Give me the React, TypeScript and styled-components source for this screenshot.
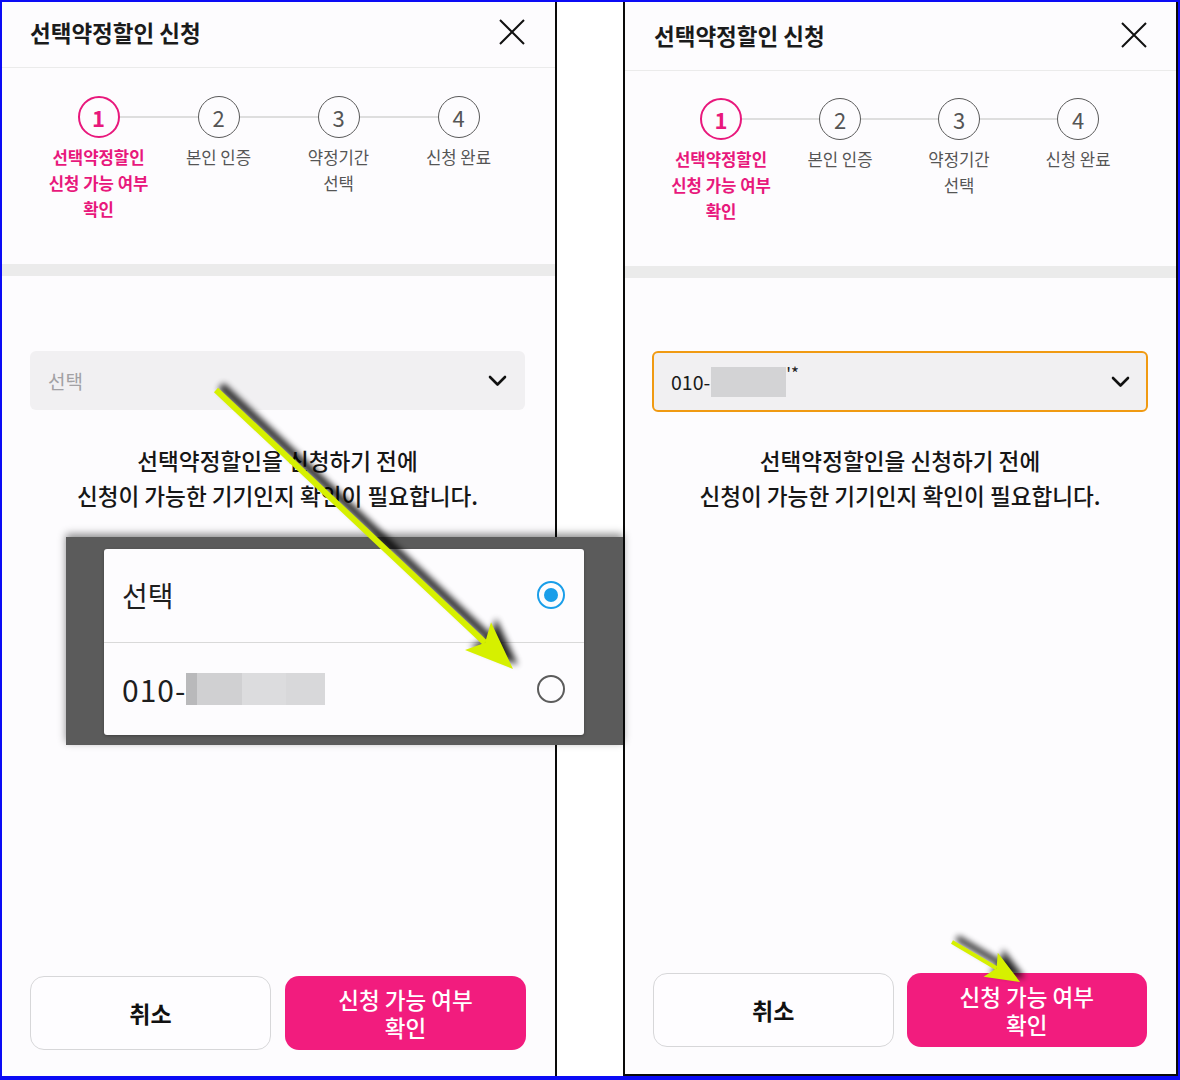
import React from "react";
import styled, { createGlobalStyle } from "styled-components";

const GlobalStyle = createGlobalStyle`
  html, body { margin: 0; padding: 0; background: #0b0bf5; }
  body { font-family: "Noto Sans CJK KR", "Noto Sans", sans-serif; }
  * { box-sizing: border-box; }
`;

const FONT = `"Noto Sans CJK KR", "Noto Sans", sans-serif`;
const PINK = "#f21c7e";
const PINK_TEXT = "#e8187c";

const Frame = styled.div`
  position: relative;
  width: 1180px;
  height: 1080px;
  background: #0b0bf5;
  padding: 2px 2px 4px 2px;
  display: flex;
  font-family: ${FONT};
`;

const Screen = styled.div<{ $right?: boolean }>`
  width: 555px;
  height: 100%;
  display: flex;
  flex-direction: column;
  background: #fdfcfe;
  border-right: 2px solid #0a0a0a;
  border-left: ${(p) => (p.$right ? "2px solid #0a0a0a" : "none")};
  border-bottom: ${(p) => (p.$right ? "2px solid #0a0a0a" : "none")};
`;

const Gap = styled.div`
  width: 66px;
  height: 100%;
  background: #ffffff;
`;

const Header = styled.div<{ $right?: boolean }>`
  height: ${(p) => (p.$right ? 69 : 66)}px;
  flex: none;
  display: flex;
  align-items: center;
  justify-content: space-between;
  padding: 0 ${(p) => (p.$right ? 29 : 30)}px ${(p) => (p.$right ? 3 : 5)}px ${(p) => (p.$right ? 29 : 28)}px;
  border-bottom: 1px solid #ebebeb;
`;

const Title = styled.h1`
  margin: 0;
  font-size: 22.5px;
  font-weight: 700;
  color: #1b1b1b;
`;

const CloseButton = styled.button`
  width: 26px;
  height: 26px;
  padding: 0;
  border: none;
  background: transparent;
  display: flex;
`;

const Steps = styled.div<{ $right?: boolean }>`
  height: ${(p) => (p.$right ? 195 : 196)}px;
  flex: none;
  display: flex;
  justify-content: center;
  padding-top: ${(p) => (p.$right ? 27 : 28)}px;
  padding-right: ${(p) => (p.$right ? 2 : 0)}px;
`;

const Step = styled.div<{ $last?: boolean; $gap: number }>`
  position: relative;
  width: ${(p) => p.$gap}px;
  display: flex;
  flex-direction: column;
  align-items: center;

  &::after {
    content: "";
    display: ${(p) => (p.$last ? "none" : "block")};
    position: absolute;
    top: 20px;
    left: 50%;
    width: ${(p) => p.$gap}px;
    height: 2px;
    background: #dedede;
  }
`;

const StepCircle = styled.div<{ $active?: boolean }>`
  position: relative;
  z-index: 1;
  width: 42px;
  height: 42px;
  border-radius: 50%;
  background: #fdfcfe;
  border: ${(p) => (p.$active ? `2px solid ${PINK_TEXT}` : "1.7px solid #5a5a5a")};
  color: ${(p) => (p.$active ? PINK_TEXT : "#555")};
  font-weight: ${(p) => (p.$active ? 700 : 400)};
  font-size: 22px;
  display: flex;
  align-items: center;
  justify-content: center;
  line-height: 1;
`;

const StepLabel = styled.div<{ $active?: boolean }>`
  margin-top: 6px;
  font-size: 16.7px;
  line-height: 26px;
  text-align: center;
  white-space: nowrap;
  color: ${(p) => (p.$active ? PINK_TEXT : "#555")};
  font-weight: ${(p) => (p.$active ? 700 : 400)};
`;

const Band = styled.div`
  height: 12px;
  flex: none;
  background: #ebebeb;
`;

const Body = styled.div<{ $right?: boolean }>`
  flex: 1;
  display: flex;
  flex-direction: column;
  padding: ${(p) => (p.$right ? "73px 28px 0 27px" : "75px 30px 0 28px")};
`;

const Select = styled.div<{ $focused?: boolean }>`
  height: ${(p) => (p.$focused ? 61 : 59)}px;
  border-radius: 6px;
  background: #f1f0f2;
  border: 2px solid ${(p) => (p.$focused ? "#f09a12" : "transparent")};
  display: flex;
  align-items: center;
  justify-content: space-between;
  padding: 0 16px 0 ${(p) => (p.$focused ? 17 : 16)}px;
`;

const SelectValue = styled.div<{ $placeholder?: boolean }>`
  display: flex;
  align-items: center;
  font-size: ${(p) => (p.$placeholder ? 19 : 19.5)}px;
  color: ${(p) => (p.$placeholder ? "#a2a1a4" : "#1a1a1a")};
`;

const Masked = styled.span`
  display: inline-block;
  width: 75px;
  height: 30px;
  margin-left: 1px;
  background: #d3d3d5;
`;

const Stars = styled.span`
  font-size: 17px;
  line-height: 1;
  align-self: flex-start;
  margin-top: -3px;
  color: #222;
`;

const Notice = styled.p<{ $right?: boolean }>`
  margin: ${(p) => (p.$right ? 31 : 33)}px 0 0;
  font-size: 22.6px;
  line-height: 35px;
  font-weight: 500;
  text-align: center;
  color: #161616;
`;

const Footer = styled.div<{ $right?: boolean }>`
  flex: none;
  display: grid;
  grid-template-columns: 1fr 1fr;
  column-gap: ${(p) => (p.$right ? 13 : 14)}px;
  padding: 0 29px ${(p) => (p.$right ? 27 : 26)}px 28px;
`;

const CancelButton = styled.button`
  height: 74px;
  border-radius: 14px;
  border: 1.5px solid #d7d7d9;
  background: #fefdff;
  font-family: ${FONT};
  font-size: 23px;
  font-weight: 700;
  color: #111;
`;

const ConfirmButton = styled.button`
  height: 74px;
  border-radius: 14px;
  border: none;
  background: ${PINK};
  font-family: ${FONT};
  font-size: 22.5px;
  font-weight: 500;
  line-height: 28px;
  color: #fff;
  padding: 0;
`;

/* Overlay: pasted picker dialog */
const PickerShade = styled.div`
  position: absolute;
  left: 66px;
  top: 537px;
  width: 557px;
  height: 208px;
  background: #5b5b5b;
  box-shadow: 0 -3px 8px rgba(0, 0, 0, 0.45);
  padding: 12px 39px 10px 38px;
  display: flex;
`;

const PickerCard = styled.div`
  flex: 1;
  background: #fdfcfe;
  border-radius: 3px;
  display: flex;
  flex-direction: column;
  box-shadow: 0 1px 3px rgba(0, 0, 0, 0.3);
`;

const PickerRow = styled.div<{ $first?: boolean }>`
  flex: 1;
  display: flex;
  align-items: center;
  justify-content: space-between;
  padding: 0 19px 0 18px;
  border-bottom: ${(p) => (p.$first ? "1px solid #d9d9d9" : "none")};
  font-size: 28px;
  color: #1e1e1e;
`;

const PickerText = styled.div`
  display: flex;
  align-items: center;
`;

const PickerNumber = styled.span`
  font-size: 30px;
  letter-spacing: 1px;
`;

const BlurBlock = styled.span<{ $w: number; $c: string }>`
  display: inline-block;
  width: ${(p) => p.$w}px;
  height: 32px;
  background: ${(p) => p.$c};
`;

const Radio = styled.span<{ $checked?: boolean }>`
  width: 28px;
  height: 28px;
  border-radius: 50%;
  border: ${(p) => (p.$checked ? "2.6px solid #1a9ee9" : "2.2px solid #5c5c5c")};
  display: flex;
  align-items: center;
  justify-content: center;

  &::after {
    content: "";
    display: ${(p) => (p.$checked ? "block" : "none")};
    width: 14px;
    height: 14px;
    border-radius: 50%;
    background: #1a9ee9;
  }
`;

const Annotations = styled.svg`
  position: absolute;
  left: 0;
  top: 0;
  width: 1180px;
  height: 1080px;
  pointer-events: none;
`;

const CloseIcon = () => (
  <svg width="26" height="26" viewBox="0 0 26 26">
    <path d="M1 1L25 25M25 1L1 25" stroke="#111" strokeWidth="2" fill="none" />
  </svg>
);

const Chevron = () => (
  <svg width="19" height="12" viewBox="0 0 19 12">
    <path d="M2 2L9.5 9.5L17 2" stroke="#111" strokeWidth="2.6" fill="none" strokeLinecap="round" strokeLinejoin="round" />
  </svg>
);

type StepDef = { n: string; label: React.ReactNode; active?: boolean };

const steps: StepDef[] = [
  {
    n: "1",
    active: true,
    label: (
      <>
        선택약정할인
        <br />
        신청 가능 여부
        <br />
        확인
      </>
    ),
  },
  { n: "2", label: "본인 인증" },
  {
    n: "3",
    label: (
      <>
        약정기간
        <br />
        선택
      </>
    ),
  },
  { n: "4", label: "신청 완료" },
];

const PhoneScreen = ({ right }: { right?: boolean }) => (
  <Screen $right={right}>
    <Header $right={right}>
      <Title>선택약정할인 신청</Title>
      <CloseButton aria-label="닫기">
        <CloseIcon />
      </CloseButton>
    </Header>
    <Steps $right={right}>
      {steps.map((s, i) => (
        <Step key={s.n} $last={i === steps.length - 1} $gap={right ? 119 : 120}>
          <StepCircle $active={s.active}>{s.n}</StepCircle>
          <StepLabel $active={s.active}>{s.label}</StepLabel>
        </Step>
      ))}
    </Steps>
    <Band />
    <Body $right={right}>
      <Select $focused={right}>
        {right ? (
          <SelectValue>
            010-
            <Masked />
            <Stars>'*</Stars>
          </SelectValue>
        ) : (
          <SelectValue $placeholder>선택</SelectValue>
        )}
        <Chevron />
      </Select>
      <Notice $right={right}>
        선택약정할인을 신청하기 전에
        <br />
        신청이 가능한 기기인지 확인이 필요합니다.
      </Notice>
    </Body>
    <Footer $right={right}>
      <CancelButton>취소</CancelButton>
      <ConfirmButton>
        신청 가능 여부
        <br />
        확인
      </ConfirmButton>
    </Footer>
  </Screen>
);

function arrowPath(x1: number, y1: number, x2: number, y2: number, len: number, half: number) {
  const dx = x2 - x1;
  const dy = y2 - y1;
  const l = Math.hypot(dx, dy);
  const ux = dx / l;
  const uy = dy / l;
  const nx = -uy;
  const ny = ux;
  const bx = x2 - ux * len;
  const by = y2 - uy * len;
  const nbx = x2 - ux * (len * 0.8);
  const nby = y2 - uy * (len * 0.8);
  const head = `M${x2} ${y2} L${bx + nx * half} ${by + ny * half} L${nbx} ${nby} L${bx - nx * half} ${by - ny * half} Z`;
  const shaft = { x1, y1, x2: nbx, y2: nby };
  return { head, shaft };
}

const Arrow = ({ x1, y1, x2, y2, len, half, w }: { x1: number; y1: number; x2: number; y2: number; len: number; half: number; w: number }) => {
  const a = arrowPath(x1, y1, x2, y2, len, half);
  return (
    <g>
      <g filter="url(#arrowShadow)" transform="translate(5 -4)" opacity="0.85">
        <line {...a.shaft} stroke="#000" strokeWidth={w + 2} />
        <path d={a.head} fill="#000" />
      </g>
      <line {...a.shaft} stroke="#d6f000" strokeWidth={w} />
      <path d={a.head} fill="#d6f000" />
    </g>
  );
};

export default function App() {
  return (
    <>
      <GlobalStyle />
      <Frame>
        <PhoneScreen />
        <Gap />
        <PhoneScreen right />

        <PickerShade>
          <PickerCard>
            <PickerRow $first>
              <PickerText>선택</PickerText>
              <Radio $checked />
            </PickerRow>
            <PickerRow>
              <PickerText>
                <PickerNumber>010-</PickerNumber>
                <BlurBlock $w={11} $c="#b9b9bb" />
                <BlurBlock $w={45} $c="#d0d0d2" />
                <BlurBlock $w={44} $c="#dcdcde" />
                <BlurBlock $w={39} $c="#d8d8da" />
              </PickerText>
              <Radio />
            </PickerRow>
          </PickerCard>
        </PickerShade>

        <Annotations viewBox="0 0 1180 1080">
          <defs>
            <filter id="arrowShadow" x="-20%" y="-20%" width="140%" height="140%">
              <feGaussianBlur stdDeviation="3" />
            </filter>
          </defs>
          <Arrow x1={216} y1={390} x2={513} y2={669} len={48} half={19} w={6} />
          <Arrow x1={952} y1={942} x2={1020} y2={982} len={34} half={14} w={4} />
        </Annotations>
      </Frame>
    </>
  );
}
